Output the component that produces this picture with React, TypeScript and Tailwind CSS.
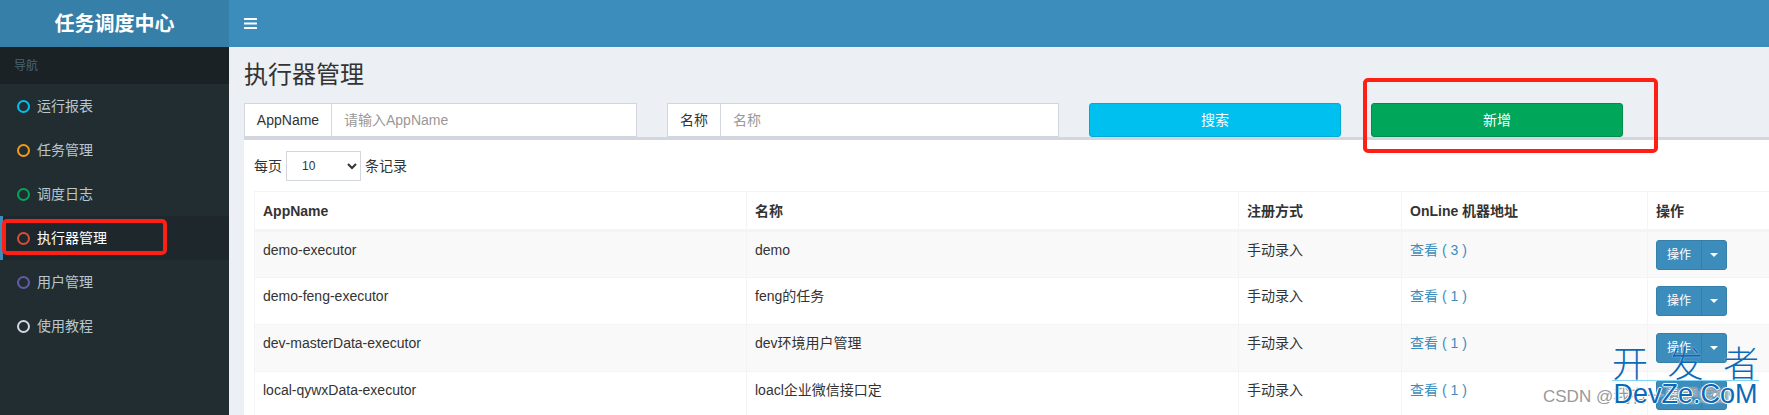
const menu = [
  { label: '运行报表', ring: 'border-[#00c0ef]' },
  { label: '任务管理', ring: 'border-[#f39c12]' },
  { label: '调度日志', ring: 'border-[#00a65a]' },
  { label: '执行器管理', ring: 'border-[#dd4b39]', active: true },
  { label: '用户管理', ring: 'border-[#605ca8]' },
  { label: '使用教程', ring: 'border-[#d2d6de]' },
];

const rows = [
  { app: 'demo-executor', name: 'demo', count: 3 },
  { app: 'demo-feng-executor', name: 'feng的任务', count: 1 },
  { app: 'dev-masterData-executor', name: 'dev环境用户管理', count: 1 },
  { app: 'local-qywxData-executor', name: 'loacl企业微信接口定', count: 1 },
];

const th = 'border border-[#f4f4f4] border-b-[3px] px-2 h-[39px] text-left font-bold';
const td = 'border border-[#f4f4f4] px-2 pt-2 align-top';

export default function App() {
  return (
    <div className="relative flex h-[415px] w-[1769px] overflow-hidden bg-[#ecf0f5] text-sm text-[#333] font-['Liberation_Sans','Noto_Sans_CJK_SC',sans-serif]">
      {/* Sidebar */}
      <aside className="flex w-[229px] shrink-0 flex-col bg-[#222d32]">
        <div className="flex h-[47px] shrink-0 items-center justify-center bg-[#367fa9] text-xl font-bold text-white">任务调度中心</div>
        <div className="flex h-[37px] shrink-0 items-center bg-[#1a2226] pl-[14px] text-xs text-[#4b646f]">导航</div>
        <ul>
          {menu.map((item) => (
            <li
              key={item.label}
              className={`flex h-[44px] items-center border-l-[3px] pl-[14px] ${
                item.active ? 'border-[#3c8dbc] bg-[#1e282c] text-white' : 'border-transparent text-[#b8c7ce]'
              }`}
            >
              <span className={`h-[13px] w-[13px] rounded-full border-[2.5px] ${item.ring}`} />
              <span className="ml-[7px]">{item.label}</span>
            </li>
          ))}
        </ul>
      </aside>

      {/* Main */}
      <div className="flex w-[1692px] shrink-0 flex-col">
        <header className="flex h-[47px] shrink-0 items-center bg-[#3c8dbc] pl-[15px]">
          <svg width="13" height="11" viewBox="0 0 13 11" fill="#fff">
            <rect width="13" height="2" y="0" rx="0.5" />
            <rect width="13" height="2" y="4.5" rx="0.5" />
            <rect width="13" height="2" y="9" rx="0.5" />
          </svg>
        </header>

        <h1 className="ml-[15px] mt-[12px] h-[44px] shrink-0 text-2xl leading-[32px] font-normal">执行器管理</h1>

        <div className="flex h-[34px] shrink-0 gap-[30px] px-[15px]">
          <div className="flex w-[393px] border border-[#d2d6de] bg-white">
            <span className="flex w-[87px] items-center justify-center border-r border-[#d2d6de]">AppName</span>
            <input placeholder="请输入AppName" className="min-w-0 flex-1 px-3 outline-none placeholder:text-[#999]" />
          </div>
          <div className="flex w-[392px] border border-[#d2d6de] bg-white">
            <span className="flex w-[53px] items-center justify-center border-r border-[#d2d6de]">名称</span>
            <input placeholder="名称" className="min-w-0 flex-1 px-3 outline-none placeholder:text-[#999]" />
          </div>
          <button className="w-[252px] rounded-[3px] border border-[#00acd6] bg-[#00c0ef] text-white">搜索</button>
          <button className="w-[252px] rounded-[3px] border border-[#008d4c] bg-[#00a65a] text-white">新增</button>
        </div>

        {/* Table box */}
        <section className="ml-[15px] min-h-0 w-[1662px] flex-1 overflow-hidden border-t-[3px] border-[#d2d6de] bg-white px-[10px]">
          <div className="flex h-[51px] items-center">
            <span>每页</span>
            <select className="mx-[4px] h-[30px] w-[75px] border border-[#d2d6de] bg-white pl-[11px] text-xs">
              <option>10</option>
            </select>
            <span>条记录</span>
          </div>
          <table className="w-[1640px] table-fixed border-collapse">
            <colgroup>
              <col className="w-[492px]" />
              <col className="w-[492px]" />
              <col className="w-[163px]" />
              <col className="w-[246px]" />
              <col className="w-[247px]" />
            </colgroup>
            <thead>
              <tr>
                <th className={th}>AppName</th>
                <th className={th}>名称</th>
                <th className={th}>注册方式</th>
                <th className={th}>OnLine 机器地址</th>
                <th className={th}>操作</th>
              </tr>
            </thead>
            <tbody>
              {rows.map((row, i) => (
                <tr key={row.app} className={`h-[47px] ${i % 2 === 0 ? 'bg-[#f9f9f9]' : 'bg-white'}`}>
                  <td className={td}>{row.app}</td>
                  <td className={td}>{row.name}</td>
                  <td className={td}>手动录入</td>
                  <td className={`${td} text-[#3c8dbc]`}>查看 ( {row.count} )</td>
                  <td className={td}>
                    <div className="flex h-[30px] w-[71px] rounded-[3px] border border-[#367fa9] bg-[#3c8dbc] text-xs text-white">
                      <span className="flex w-[45px] items-center justify-center border-r border-[#367fa9]">操作</span>
                      <span className="flex flex-1 items-center justify-center">
                        <span className="border-x-[4px] border-t-[4px] border-x-transparent border-t-white" />
                      </span>
                    </div>
                  </td>
                </tr>
              ))}
            </tbody>
          </table>
        </section>
      </div>

      {/* Red annotations */}
      <div className="absolute left-[2px] top-[219px] h-[36px] w-[165px] rounded-[5px] border-[4px] border-[#ff2015]" />
      <div className="absolute left-[1363px] top-[78px] h-[75px] w-[295px] rounded-[5px] border-[4px] border-[#ff2015]" />

      {/* Watermarks */}
      <div className="absolute left-[1543px] top-[387px] text-[17px] leading-[20px] text-[#999] [text-shadow:0_0_2px_#fff]">CSDN @我有一只肥螳螂</div>
      <div className="absolute left-[1612px] top-[347px] flex w-[147px] flex-col items-center text-[#0a6ab8]">
        <div className="flex h-[34px] w-full justify-between border-b border-[#7fd4f5] text-[36px] leading-[36px] font-light [text-shadow:0_0_1px_#fff]">
          <span>开</span>
          <span>发</span>
          <span>者</span>
        </div>
        <div className="text-[27px] leading-[27px] [text-shadow:1px_0_0_#fff,-1px_0_0_#fff,0_1px_0_#fff,0_-1px_0_#fff]">DevZe.CoM</div>
      </div>
    </div>
  );
}
